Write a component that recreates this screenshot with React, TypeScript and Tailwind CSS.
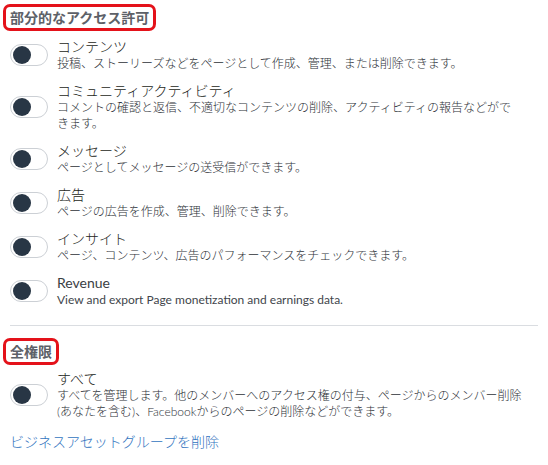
const font = {
  fontFamily: '"Segoe UI", Lato, "Noto Sans CJK JP", sans-serif',
};

type Perm = { title: string; desc: React.ReactNode; latin?: boolean };

const partial: Perm[] = [
  {
    title: "コンテンツ",
    desc: "投稿、ストーリーズなどをページとして作成、管理、または削除できます。",
  },
  {
    title: "コミュニティアクティビティ",
    desc: (
      <>
        コメントの確認と返信、不適切なコンテンツの削除、アクティビティの報告などがで
        <br />
        きます。
      </>
    ),
  },
  { title: "メッセージ", desc: "ページとしてメッセージの送受信ができます。" },
  { title: "広告", desc: "ページの広告を作成、管理、削除できます。" },
  {
    title: "インサイト",
    desc: "ページ、コンテンツ、広告のパフォーマンスをチェックできます。",
  },
  {
    title: "Revenue",
    desc: "View and export Page monetization and earnings data.",
    latin: true,
  },
];

function Toggle() {
  return (
    <div className="flex h-[22px] w-[38px] shrink-0 items-center rounded-full border border-[#ccd0d5] bg-white pl-[2px]">
      <div className="h-[18px] w-[18px] rounded-full bg-[#283645]" />
    </div>
  );
}

function Row({ p }: { p: Perm }) {
  return (
    <div className="ml-[7px] flex items-center gap-[9px]">
      <Toggle />
      <div
        className={
          p.latin ? "font-normal text-[#3a3e44]" : "font-light text-[#1c1e21]"
        }
      >
        <div className="text-[14px] leading-[18px]">{p.title}</div>
        <div
          className={
            p.latin
              ? "text-[12px] leading-[16px] text-[#41454b]"
              : "text-[12px] leading-[16px] text-[#2e3238]"
          }
        >
          {p.desc}
        </div>
      </div>
    </div>
  );
}

function Heading({ children }: { children: React.ReactNode }) {
  return (
    <div className="inline-block rounded-[7px] border-[3px] border-[#e4121a] px-[4px] text-[14px] font-bold leading-[21px] text-[#5d6168]">
      {children}
    </div>
  );
}

export default function App() {
  return (
    <div className="h-[465px] w-[548px] bg-white pl-[3px] pt-[4px]" style={font}>
      <Heading>部分的なアクセス許可</Heading>
      <div className="mt-[7px] flex flex-col gap-[10px]">
        {partial.map((p) => (
          <Row key={p.title} p={p} />
        ))}
      </div>
      <div className="ml-[7px] mr-[10px] mt-[17px] border-t border-[#dadde1]" />
      <div className="mt-[12px]">
        <Heading>全権限</Heading>
      </div>
      <div className="mt-[5px]">
        <Row
          p={{
            title: "すべて",
            desc: (
              <>
                すべてを管理します。他のメンバーへのアクセス権の付与、ページからのメンバー削除
                <br />
                (あなたを含む)、Facebookからのページの削除などができます。
              </>
            ),
          }}
        />
      </div>
      <div className="ml-[7px] mt-[12px] text-[14px] font-light leading-[20px] text-[#3274c0]">
        ビジネスアセットグループを削除
      </div>
    </div>
  );
}
